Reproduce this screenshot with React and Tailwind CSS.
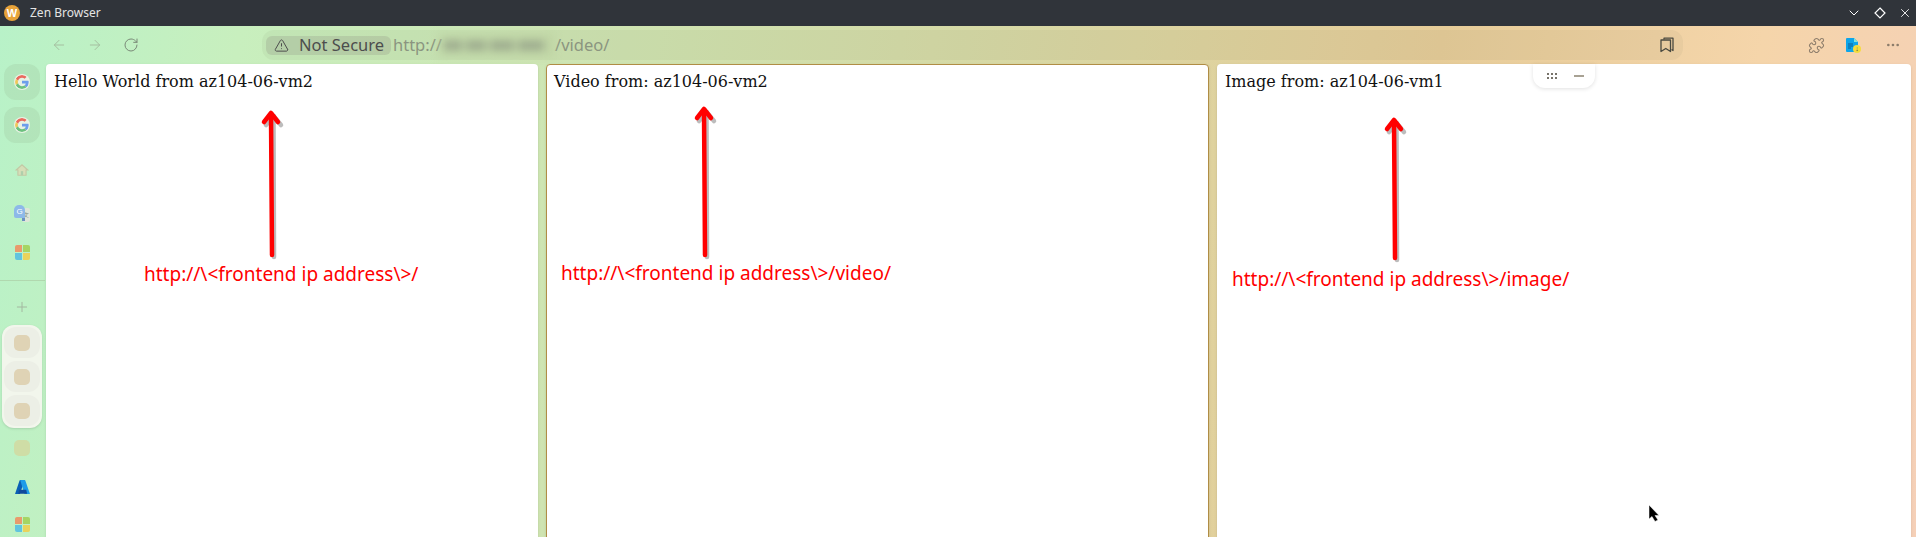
import React from 'react';
import { ArrowLeft, ArrowRight, RotateCw, TriangleAlert, Puzzle, Ellipsis, ChevronDown, X, Plus } from 'lucide-react';

// Google "G" favicon, used twice in the sidebar
const GoogleIcon = () => (
  <svg width="16" height="16" viewBox="0 0 48 48" className="rounded-full bg-[#e8f2e4] p-[1px]">
    <path fill="#ea6a5e" d="M24 9.5c3.5 0 6.700 1.200 9.200 3.600l6.900-6.900C35.900 2.400 30.400 0 24 0 14.600 0 6.500 5.400 2.600 13.200l8 6.200C12.500 13.600 17.800 9.500 24 9.500z" />
    <path fill="#6d9eeb" d="M47 24.500c0-1.600-.1-3.100-.4-4.500H24v9h12.900c-.6 3-2.200 5.500-4.700 7.200l7.700 6c4.500-4.200 7.100-10.300 7.100-17.700z" />
    <path fill="#f0c75a" d="M10.600 28.600c-.5-1.400-.8-3-.8-4.600s.3-3.200.8-4.600l-8-6.200C.9 16.500 0 20.100 0 24s.9 7.500 2.600 10.800l8-6.200z" />
    <path fill="#6cc17f" d="M24 48c6.500 0 11.900-2.100 15.900-5.800l-7.700-6c-2.100 1.500-4.900 2.300-8.200 2.300-6.200 0-11.500-4.100-13.400-9.900l-8 6.200C6.500 42.600 14.600 48 24 48z" />
  </svg>
);

const WindowsIcon = () => (
  <div className="grid h-[15px] w-[15px] grid-cols-2 gap-[1px] overflow-hidden rounded-[2px]">
    <div className="bg-[#e99a6c]" />
    <div className="bg-[#a5d564]" />
    <div className="bg-[#62c4de]" />
    <div className="bg-[#e9d35c]" />
  </div>
);

const HomeIcon = () => (
  <svg width="14" height="14" viewBox="0 0 24 24" className="opacity-60">
    <path fill="#e8d3b0" stroke="#c9ae90" strokeWidth="2" d="M2 12 12 3l10 9h-3v9H5v-9z" />
    <rect x="10" y="14" width="4" height="7" fill="#a8b89a" />
  </svg>
);

const TranslateIcon = () => (
  <div className="relative h-[20px] w-[16px]">
    <div className="absolute right-0 top-[3px] h-[14px] w-[8px] rounded-[2px] bg-[#dde6d8] text-center font-['Liberation_Sans',sans-serif] text-[6px] leading-[14px] text-[#7d8a80]">
      文
    </div>
    <div className="absolute left-0 top-0 h-[13px] w-[11px] rounded-t-[5px] rounded-bl-[2px] bg-[#8db9e8] text-center font-['Liberation_Sans',sans-serif] text-[8px] leading-[13px] text-white">
      G
    </div>
    <div className="absolute left-[8px] top-[13px] h-[3px] w-[3px] bg-[#6d8fc0]" />
  </div>
);

const AzureIcon = () => (
  <svg width="15" height="14" viewBox="0 0 96 90">
    <path fill="#0a5fb4" d="M33 0h29L32 89a5 5 0 0 1-4 3H5a4 4 0 0 1-4-6L29 3a4 4 0 0 1 4-3z" />
    <path fill="#1e9be8" d="M62 0a5 5 0 0 1 4 3l29 83a4 4 0 0 1-4 6H64a5 5 0 0 1-4-3L33 0z" />
    <path fill="#114a9c" d="M26 62h46l6 26H21z" />
  </svg>
);

const BookmarksIcon = () => (
  <svg width="14" height="16" viewBox="0 0 14 16" fill="none" stroke="#4a4a40" strokeWidth="1.300" strokeLinejoin="round">
    <path d="M4 2.500V1.200h9v12.300l-1.500-1" />
    <path d="M1 3h9.500v11.500l-4.700-3-4.800 3z" />
  </svg>
);

const DocumentIcon = () => (
  <div className="relative h-[15px] w-[12px]">
    <svg width="12" height="14" viewBox="0 0 12 14">
      <path fill="#0ea5e9" d="M0 1a1 1 0 0 1 1-1h7l4 4v10H1a1 1 0 0 1-1-1z" />
      <path fill="#7fe3d8" d="M8 0l4 4H8z" />
      <path stroke="#0b5f96" strokeWidth="1" d="M2 6h5M2 8h5M2 10h3" />
    </svg>
    <div className="absolute left-[7px] top-[7px] flex h-[8px] w-[8px] items-center justify-center rounded-full bg-[#f5dc3c] text-[7px] leading-none text-[#444]">
      ↓
    </div>
  </div>
);

// Tiles of the sidebar
const Tile = ({ active, children }) => (
  <div className={`flex h-[36px] w-[36px] items-center justify-center rounded-xl ${active ? 'bg-[#a0c8a0]/30' : ''}`}>
    {children}
  </div>
);

const GroupItem = () => (
  <div className="flex h-[31px] w-[36px] items-center justify-center rounded-xl bg-[#ecefe6]">
    <div className="h-[16px] w-[16px] rounded-[5px] bg-[#dfd3b5]" />
  </div>
);

const Sidebar = () => (
  <aside className="flex w-[46px] shrink-0 flex-col items-center pl-[0px] pr-[2px]">
    <Tile active><GoogleIcon /></Tile>
    <div className="mt-[7px]"><Tile active><GoogleIcon /></Tile></div>
    <div className="mt-[9px]"><Tile><HomeIcon /></Tile></div>
    <div className="mt-[9px]"><Tile><TranslateIcon /></Tile></div>
    <div className="mt-[1px]"><Tile><WindowsIcon /></Tile></div>
    <div className="mt-[10px] h-px w-[46px] bg-[#a8c8a0]/60" />
    <div className="mt-[10px] flex h-[32px] items-center justify-center text-[#a3b8a0]">
      <Plus size={16} strokeWidth={1.500} />
    </div>
    <div className="mt-[2px] flex w-[40px] flex-col gap-[3px] rounded-xl bg-[#f2f6ec] px-[2px] py-[2px] shadow-sm">
      <GroupItem />
      <GroupItem />
      <GroupItem />
    </div>
    <div className="mt-[12px] h-[16px] w-[16px] rounded-[5px] bg-[#cfdda6]" />
    <div className="mt-[24px]"><AzureIcon /></div>
    <div className="mt-[23px]"><WindowsIcon /></div>
  </aside>
);

const AddressBar = () => (
  <div className="ml-[123px] flex h-[30px] w-[1421px] items-center rounded-xl bg-[#6b6b50]/[0.07] pl-[4px] pr-[9px] font-['Noto_Sans',sans-serif] text-[16.500px]">
    <div className="flex h-[19px] w-[125px] shrink-0 items-center rounded-md bg-[#8a8a80]/25 pl-[8px] text-[#4d4d4d]">
      <TriangleAlert size={15} strokeWidth={1.600} className="shrink-0" />
      <span className="ml-[10px] whitespace-nowrap">Not Secure</span>
    </div>
    <span className="ml-[2px] w-[45px] shrink-0 whitespace-nowrap text-[#8b9580]">http://</span>
    <div className="flex h-[25px] w-[117px] shrink-0 items-center gap-[4px] bg-[#bccfa0]/50 pl-[6px] blur-[4px]">
      <div className="h-[9px] w-[18px] bg-[#9aa88c]" />
      <div className="h-[9px] w-[20px] bg-[#9aa88c]" />
      <div className="h-[9px] w-[24px] bg-[#9aa88c]" />
      <div className="h-[9px] w-[26px] bg-[#9aa88c]" />
    </div>
    <span className="text-[#8b9580]">/video/</span>
    <div className="ml-auto"><BookmarksIcon /></div>
  </div>
);

// Red hand drawn arrow with its shadow, box spans tip to tail
const UpArrow = ({ className, height }) => (
  <svg width="26" height={height + 8} viewBox={`0 0 26 ${height + 8}`} fill="none" className={className}>
    <g stroke="#6b6b6b" strokeOpacity="0.45" strokeWidth="4.500" strokeLinecap="round" strokeLinejoin="round">
      <path d={`M13.500 7 14 ${height + 2}`} />
      <path d="M6 16 13.500 7 21 16" />
    </g>
    <g stroke="#ff0000" strokeWidth="4.500" strokeLinecap="round" strokeLinejoin="round">
      <path d={`M11 5 12 ${height}`} />
      <path d="M4 13 11 4 18 13" />
    </g>
  </svg>
);

const Panel = ({ width, bordered, title, children }) => (
  <div
    className={`relative h-[520px] shrink-0 rounded-t-[4px] bg-white shadow-sm ${bordered ? 'border border-[#b08d45]' : ''}`}
    style={{ width }}
  >
    <div className={`font-['DejaVu_Serif',serif] text-[16px] leading-[19px] text-[#111] ${bordered ? 'pl-[7px] pt-[7px]' : 'pl-[8px] pt-[8px]'}`}>
      {title}
    </div>
    {children}
  </div>
);

const Label = ({ className, children }) => (
  <div className={`absolute whitespace-nowrap font-['Noto_Sans',sans-serif] text-[19px] leading-[26px] text-[#ff0000] ${className}`}>
    {children}
  </div>
);

export default function App() {
  return (
    <div className="relative flex h-[537px] w-[1916px] flex-col overflow-hidden">
      {/* Window title bar */}
      <header className="flex h-[26px] shrink-0 items-center bg-[#30343a] text-[#e4e4e4]">
        <div className="ml-[4px] flex h-[16px] w-[16px] items-center justify-center rounded-full bg-[#e8a33a] font-['Liberation_Sans',sans-serif] text-[11px] font-bold leading-none text-white">
          W
        </div>
        <span className="ml-[10px] font-['Noto_Sans',sans-serif] text-[12px]">Zen Browser</span>
        <div className="ml-auto flex items-center gap-[12px] pr-[4px] text-white">
          <ChevronDown size={16} strokeWidth={1.500} />
          <svg width="12" height="12" viewBox="0 0 12 12" fill="none" stroke="currentColor" strokeWidth="1.200">
            <path d="M6 1l5 5-5 5-5-5z" />
          </svg>
          <X size={14} strokeWidth={1.500} />
        </div>
      </header>

      <div className="flex min-h-0 flex-1 flex-col bg-[linear-gradient(100deg,#b8f2c8_0%,#c8efbe_12%,#d4dca8_45%,#e6cc98_72%,#f5d5aa_88%,#f5d0b8_100%)]">
        {/* Browser toolbar */}
        <div className="flex h-[38px] shrink-0 items-center">
          <div className="ml-[51px] flex items-center gap-[20px] text-[#a5bfa0]">
            <ArrowLeft size={16} strokeWidth={1.500} />
            <ArrowRight size={16} strokeWidth={1.500} />
            <RotateCw size={16} strokeWidth={1.500} className="text-[#7a8a78]" />
          </div>
          <AddressBar />
          <div className="ml-[125px] text-[#8d7d6b]"><Puzzle size={17} strokeWidth={1.500} /></div>
          <div className="ml-[21px]"><DocumentIcon /></div>
          <div className="ml-[27px] text-[#8d7d6b]"><Ellipsis size={16} /></div>
        </div>

        <div className="flex min-h-0 flex-1 pr-[5px]">
          <Sidebar />
          <main className="flex gap-[8px]">
            <Panel width={492} title="Hello World from az104-06-vm2">
              <UpArrow className="absolute left-[214px] top-[45px]" height={146} />
              <Label className="left-[98px] top-[197px]">http://\&lt;frontend ip address\&gt;/</Label>
            </Panel>
            <Panel width={663} bordered title="Video from: az104-06-vm2">
              <UpArrow className="absolute left-[146px] top-[40px]" height={150} />
              <Label className="left-[14px] top-[195px]">http://\&lt;frontend ip address\&gt;/video/</Label>
            </Panel>
            <Panel width={694} title="Image from: az104-06-vm1">
              <UpArrow className="absolute left-[166px] top-[52px]" height={142} />
              <Label className="left-[15px] top-[202px]">http://\&lt;frontend ip address\&gt;/image/</Label>
            </Panel>
          </main>
        </div>
      </div>

      {/* Floating compact-mode control over the third panel */}
      <div className="absolute left-[1533px] top-[64px] flex h-[24px] w-[62px] items-center rounded-b-xl bg-white pl-[14px] shadow-[0_1px_4px_rgba(0,0,0,0.12)]">
        <div className="grid grid-cols-3 gap-x-[2px] gap-y-[2px]">
          {[0, 1, 2, 3, 4, 5].map((i) => (
            <div key={i} className="h-[2px] w-[2px] bg-[#77736a]" />
          ))}
        </div>
        <div className="ml-[17px] h-[2px] w-[10px] bg-[#a8a294]" />
      </div>

      {/* Mouse pointer */}
      <svg width="14" height="19" viewBox="0 0 14 19" className="absolute left-[1648px] top-[504px]">
        <path fill="#000" stroke="#fff" strokeWidth="0.500" d="M1 1v14l3-2.500 3 5 3-1.500-3-4.500h4z" />
      </svg>
    </div>
  );
}
